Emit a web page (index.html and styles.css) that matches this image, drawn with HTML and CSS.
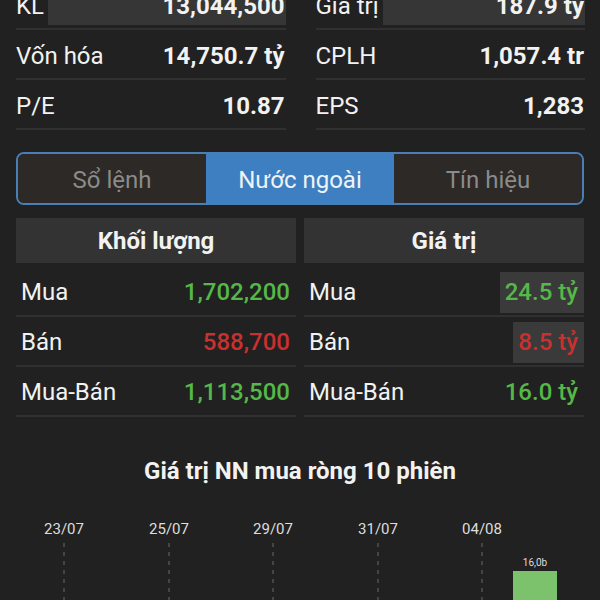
FILE: index.html
```html
<!DOCTYPE html>
<html lang="vi">

<head>
    <meta charset="UTF-8">
    <meta name="viewport" content="width=device-width, initial-scale=1.0">
    <title>Chi tiết cổ phiếu</title>
    <link rel="stylesheet" href="styles.css">
</head>

<body>
    <div class="page">
        <!-- Thông tin chung -->
        <div class="stats">
            <div class="stats-col">
                <div class="stat-row">
                    <span class="stat-label">KL</span>
                    <span class="stat-value flash">13,044,500</span>
                </div>
                <div class="stat-row">
                    <span class="stat-label">Vốn hóa</span>
                    <span class="stat-value">14,750.7 tỷ</span>
                </div>
                <div class="stat-row">
                    <span class="stat-label">P/E</span>
                    <span class="stat-value">10.87</span>
                </div>
            </div>
            <div class="stats-col">
                <div class="stat-row">
                    <span class="stat-label">Giá trị</span>
                    <span class="stat-value flash">187.9 tỷ</span>
                </div>
                <div class="stat-row">
                    <span class="stat-label">CPLH</span>
                    <span class="stat-value">1,057.4 tr</span>
                </div>
                <div class="stat-row">
                    <span class="stat-label">EPS</span>
                    <span class="stat-value">1,283</span>
                </div>
            </div>
        </div>

        <!-- Tabs -->
        <div class="tabs">
            <div class="tab">Sổ lệnh</div>
            <div class="tab active">Nước ngoài</div>
            <div class="tab">Tín hiệu</div>
        </div>

        <!-- Giao dịch nước ngoài -->
        <div class="foreign">
            <div class="foreign-col">
                <div class="foreign-head">Khối lượng</div>
                <div class="foreign-row">
                    <span class="foreign-label">Mua</span>
                    <span class="foreign-value up">1,702,200</span>
                </div>
                <div class="foreign-row">
                    <span class="foreign-label">Bán</span>
                    <span class="foreign-value down">588,700</span>
                </div>
                <div class="foreign-row">
                    <span class="foreign-label">Mua-Bán</span>
                    <span class="foreign-value up">1,113,500</span>
                </div>
            </div>
            <div class="foreign-col">
                <div class="foreign-head">Giá trị</div>
                <div class="foreign-row">
                    <span class="foreign-label">Mua</span>
                    <span class="foreign-value up boxed">24.5 tỷ</span>
                </div>
                <div class="foreign-row">
                    <span class="foreign-label">Bán</span>
                    <span class="foreign-value down boxed">8.5 tỷ</span>
                </div>
                <div class="foreign-row">
                    <span class="foreign-label">Mua-Bán</span>
                    <span class="foreign-value up">16.0 tỷ</span>
                </div>
            </div>
        </div>

        <!-- Biểu đồ -->
        <h2 class="chart-title">Giá trị NN mua ròng 10 phiên</h2>
        <svg class="chart" width="600" height="110" viewBox="0 0 600 110">
            <g class="chart-dates">
                <text x="64" y="33">23/07</text>
                <text x="169" y="33">25/07</text>
                <text x="273" y="33">29/07</text>
                <text x="378" y="33">31/07</text>
                <text x="482" y="33">04/08</text>
            </g>
            <g class="chart-grid">
                <line x1="64" y1="42" x2="64" y2="110" />
                <line x1="169" y1="42" x2="169" y2="110" />
                <line x1="273" y1="42" x2="273" y2="110" />
                <line x1="378" y1="42" x2="378" y2="110" />
                <line x1="482" y1="42" x2="482" y2="110" />
            </g>
            <rect class="chart-bar" x="513" y="70" width="44" height="40" />
            <text class="chart-bar-label" x="535" y="65">16,0b</text>
        </svg>
    </div>
</body>

</html>
```

FILE: styles.css
```css
* {
    margin: 0;
    padding: 0;
    box-sizing: border-box;
}

body {
    font-family: Roboto, "Noto Sans", sans-serif;
    background-color: #212121;
    color: #f2f2f2;
    overflow: hidden;
}

/* trang đã cuộn xuống một chút */
.page {
    margin-top: -20px;
}

.stats {
    display: grid;
    grid-template-columns: 1fr 1fr;
    gap: 30px;
    padding: 0 15px 0 16px;
}

.stat-row {
    display: flex;
    align-items: center;
    height: 50px;
    padding-top: 3px;
    border-bottom: 2px solid #303030;
    font-size: 24px;
}

.stat-label {
    white-space: nowrap;
}

.stat-value {
    margin-left: auto;
    font-weight: bold;
    padding: 0 1px;
    line-height: 38px;
    text-align: right;
    white-space: nowrap;
}

.stat-value.flash {
    flex: 1;
    margin-left: 4px;
    background-color: #363636;
}

.tabs {
    display: flex;
    margin: 22px 16px 0 16px;
    height: 53px;
    border: 2px solid #4a7fb6;
    border-radius: 8px;
    overflow: hidden;
}

.tab {
    flex: 1;
    display: flex;
    align-items: center;
    justify-content: center;
    padding-top: 3px;
    background-color: #2c2927;
    color: #8b8b8b;
    font-size: 24px;
}

.tab.active {
    background-color: #3d7fc0;
    color: #eef3f8;
}

.foreign {
    display: grid;
    grid-template-columns: 1fr 1fr;
    gap: 8px;
    padding: 0 16px;
    margin-top: 13px;
}

.foreign-head {
    height: 45px;
    display: flex;
    align-items: center;
    justify-content: center;
    background-color: #333333;
    font-size: 24px;
    font-weight: bold;
    margin-bottom: 4px;
}

.foreign-row {
    display: flex;
    align-items: center;
    height: 50px;
    padding-top: 2px;
    border-bottom: 2px solid #303030;
    font-size: 24px;
}

.foreign-label {
    padding-left: 5px;
}

.foreign-value {
    margin-left: auto;
    padding: 0 6px;
    line-height: 41px;
    font-weight: 500;
}

.foreign-value.boxed {
    background-color: #3a3a3a;
    padding-left: 5px;
}

.up {
    color: #55b848;
}

.down {
    color: #c9302f;
}

.chart-title {
    margin-top: 40px;
    text-align: center;
    font-size: 24px;
    line-height: 28px;
    font-weight: bold;
}

.chart {
    display: block;
    margin-top: 16px;
}

.chart-dates text {
    fill: #dddddd;
    font-size: 15px;
    text-anchor: middle;
}

.chart-grid line {
    stroke: #6a6a6a;
    stroke-width: 1;
    stroke-dasharray: 4 5;
}

.chart-bar {
    fill: #7cc26c;
}

.chart-bar-label {
    fill: #dddddd;
    font-size: 10px;
    text-anchor: middle;
}
```
